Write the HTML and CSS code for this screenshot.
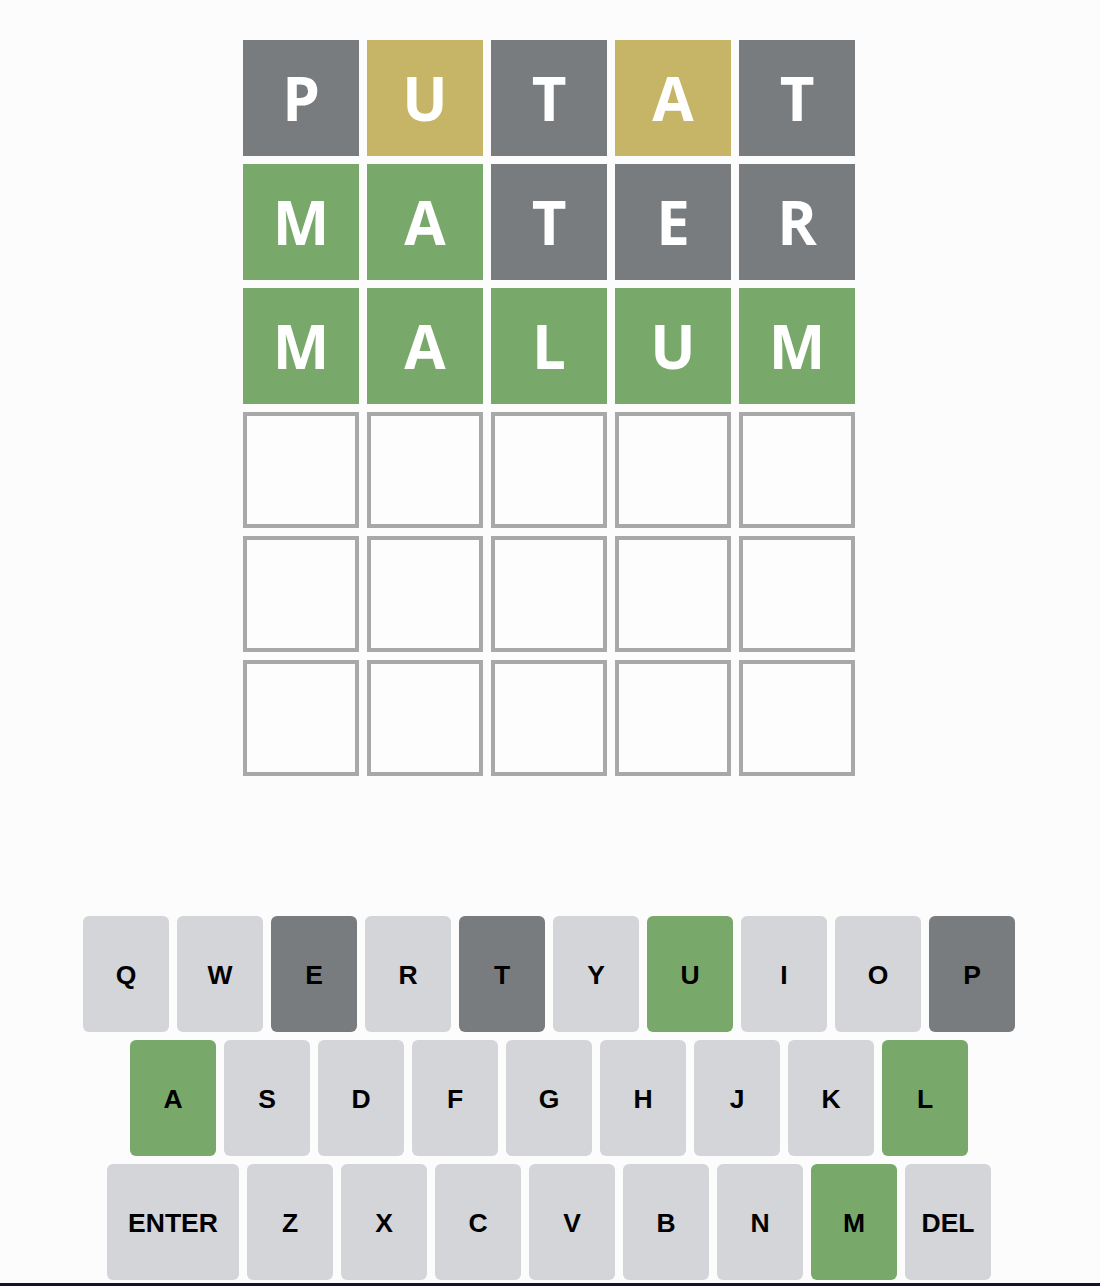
FILE: index.html
```html
<!DOCTYPE html>
<html>
<head>
<meta charset="utf-8">
<link rel="stylesheet" href="styles.css">
</head>
<body>
<div class="app">
  <div class="board">
    <div class="row">
      <div class="tile absent">P</div>
      <div class="tile present">U</div>
      <div class="tile absent">T</div>
      <div class="tile present">A</div>
      <div class="tile absent">T</div>
    </div>
    <div class="row">
      <div class="tile correct">M</div>
      <div class="tile correct">A</div>
      <div class="tile absent">T</div>
      <div class="tile absent">E</div>
      <div class="tile absent">R</div>
    </div>
    <div class="row">
      <div class="tile correct">M</div>
      <div class="tile correct">A</div>
      <div class="tile correct">L</div>
      <div class="tile correct">U</div>
      <div class="tile correct">M</div>
    </div>
    <div class="row">
      <div class="tile empty"></div><div class="tile empty"></div><div class="tile empty"></div><div class="tile empty"></div><div class="tile empty"></div>
    </div>
    <div class="row">
      <div class="tile empty"></div><div class="tile empty"></div><div class="tile empty"></div><div class="tile empty"></div><div class="tile empty"></div>
    </div>
    <div class="row">
      <div class="tile empty"></div><div class="tile empty"></div><div class="tile empty"></div><div class="tile empty"></div><div class="tile empty"></div>
    </div>
  </div>

  <div class="keyboard">
    <div class="krow">
      <div class="key">Q</div>
      <div class="key">W</div>
      <div class="key k-absent">E</div>
      <div class="key">R</div>
      <div class="key k-absent">T</div>
      <div class="key">Y</div>
      <div class="key k-correct">U</div>
      <div class="key">I</div>
      <div class="key">O</div>
      <div class="key k-absent">P</div>
    </div>
    <div class="krow">
      <div class="key k-correct">A</div>
      <div class="key">S</div>
      <div class="key">D</div>
      <div class="key">F</div>
      <div class="key">G</div>
      <div class="key">H</div>
      <div class="key">J</div>
      <div class="key">K</div>
      <div class="key k-correct">L</div>
    </div>
    <div class="krow">
      <div class="key wide">ENTER</div>
      <div class="key">Z</div>
      <div class="key">X</div>
      <div class="key">C</div>
      <div class="key">V</div>
      <div class="key">B</div>
      <div class="key">N</div>
      <div class="key k-correct">M</div>
      <div class="key">DEL</div>
    </div>
  </div>
</div>
<div class="bottom-bar"></div>
</body>
</html>
```

FILE: styles.css
```css
html, body {
  margin: 0;
  padding: 0;
  background: #fcfcfc;
}

.app {
  width: 1098px;
  height: 1283px;
  display: flex;
  flex-direction: column;
  align-items: center;
}

.board {
  margin-top: 40px;
  display: flex;
  flex-direction: column;
  gap: 8px;
}

.row {
  display: flex;
  gap: 8px;
}

.tile {
  width: 116px;
  height: 116px;
  box-sizing: border-box;
  display: flex;
  align-items: center;
  justify-content: center;
  font-family: "Open Sans", "Liberation Sans", sans-serif;
  font-weight: 700;
  font-size: 60px;
  color: #ffffff;
}

.absent { background: #787c7f; }
.present { background: #c6b566; }
.correct { background: #79a86b; }
.empty {
  border: 4px solid #a8a8a8;
  background: #fdfdfd;
}

.keyboard {
  margin-top: 140px;
  display: flex;
  flex-direction: column;
  gap: 8px;
  align-items: center;
}

.krow {
  display: flex;
  gap: 8px;
}

.key {
  width: 86px;
  height: 116px;
  box-sizing: border-box;
  padding-top: 3px;
  border-radius: 6px;
  background: #d4d5d9;
  display: flex;
  align-items: center;
  justify-content: center;
  font-family: "Liberation Sans", Arial, sans-serif;
  font-weight: 700;
  font-size: 26.5px;
  color: #000000;
}

.key.wide { width: 132px; }
.k-absent { background: #787c7f; }
.k-correct { background: #79a86b; }

.bottom-bar {
  height: 3px;
  background: #12142a;
}
```
